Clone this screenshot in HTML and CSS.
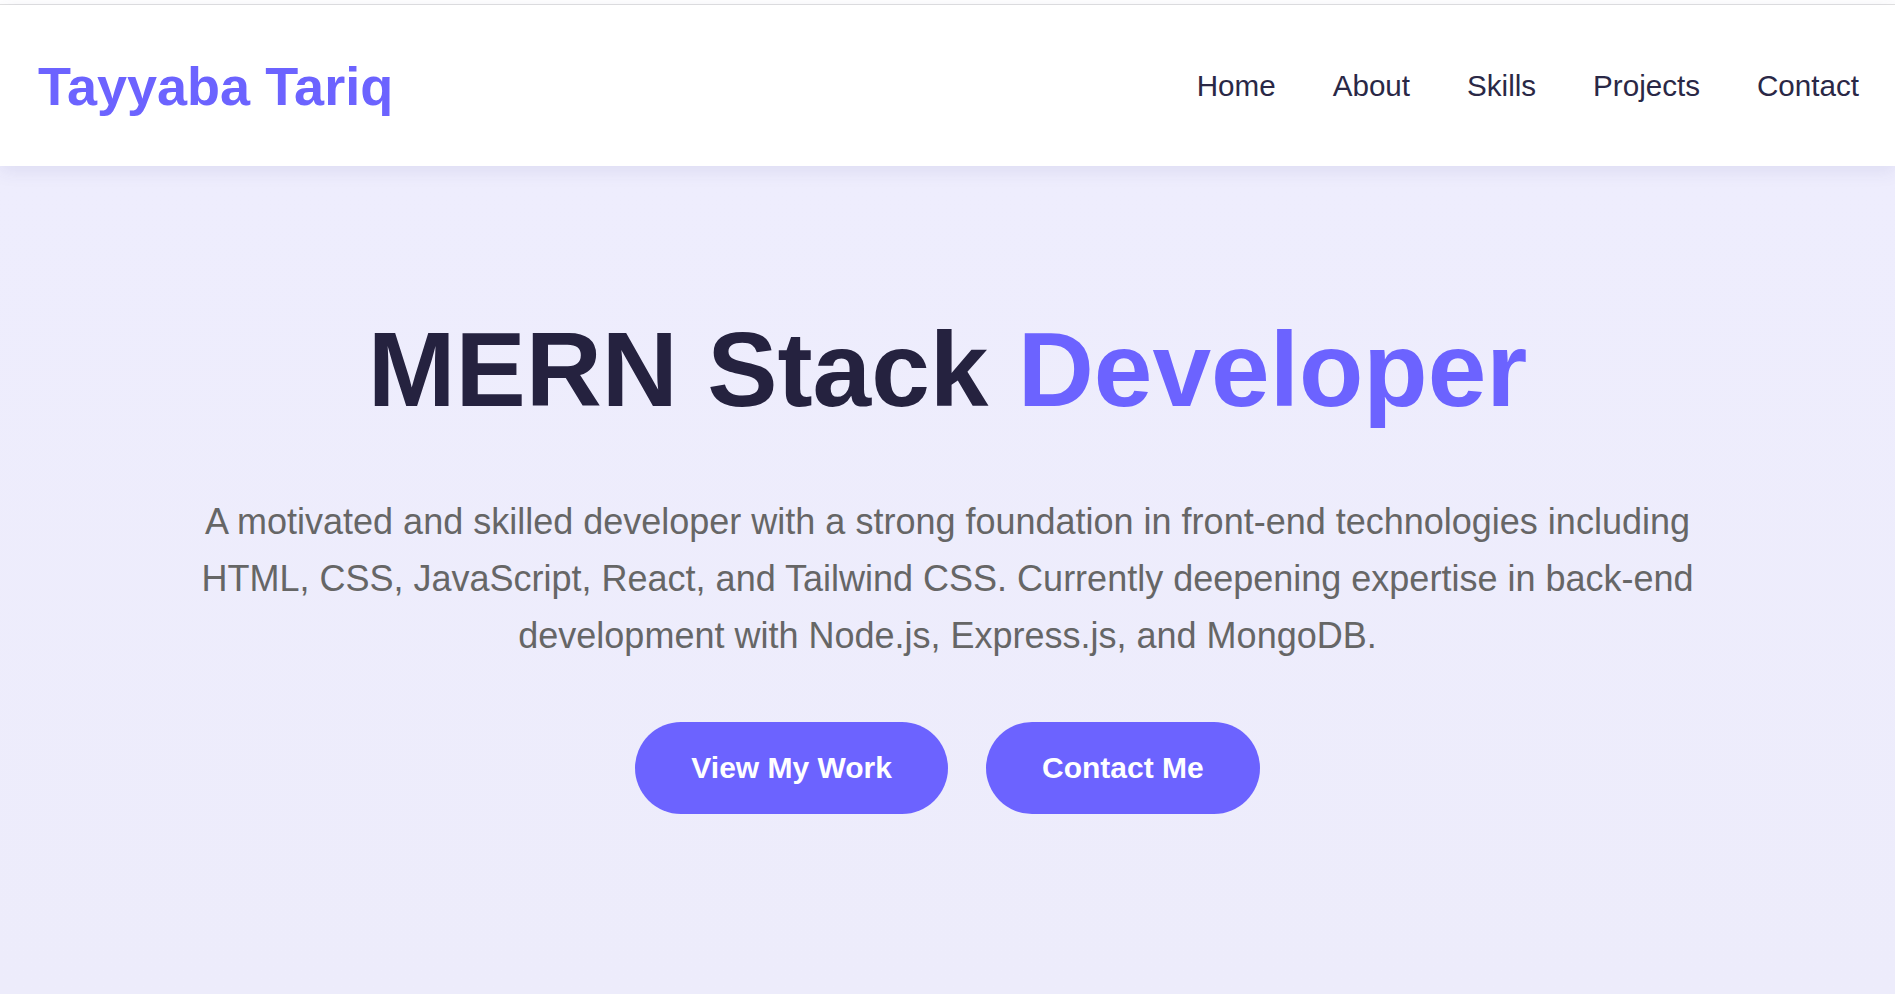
FILE: index.html
```html
<!DOCTYPE html>
<html lang="en">
<head>
<meta charset="utf-8">
<title>Tayyaba Tariq</title>
<link rel="stylesheet" href="styles.css">
</head>
<body>
<div class="topline"></div>
<header class="header">
  <a class="logo" href="#">Tayyaba Tariq</a>
  <nav class="nav">
    <a href="#">Home</a>
    <a href="#">About</a>
    <a href="#">Skills</a>
    <a href="#">Projects</a>
    <a href="#">Contact</a>
  </nav>
</header>
<section class="hero">
  <h1 class="hero-title">MERN Stack <span class="accent">Developer</span></h1>
  <p class="hero-text">A motivated and skilled developer with a strong foundation in front-end technologies including HTML, CSS, JavaScript, React, and Tailwind CSS. Currently deepening expertise in back-end development with Node.js, Express.js, and MongoDB.</p>
  <div class="hero-actions">
    <a class="btn" href="#">View My Work</a>
    <a class="btn" href="#">Contact Me</a>
  </div>
</section>
</body>
</html>
```

FILE: styles.css
```css
* { box-sizing: border-box; }
html, body { margin: 0; padding: 0; }
body {
  font-family: "Liberation Sans", Arial, sans-serif;
  background: #eeedfc;
  height: 994px;
  overflow: hidden;
}
a { text-decoration: none; }
.topline {
  height: 5px;
  background: #fff;
  border-bottom: 1px solid #e2e2e2;
}
.header {
  position: relative;
  z-index: 2;
  height: 161px;
  background: #fff;
  display: flex;
  align-items: center;
  justify-content: space-between;
  padding: 0 36px 0 38px;
  box-shadow: 0 4px 18px rgba(60, 55, 140, 0.10);
}
.logo {
  color: #6c63ff;
  font-weight: 700;
  font-size: 54px;
  line-height: 1;
}
.nav {
  display: flex;
  gap: 57px;
}
.nav a {
  color: #2a2846;
  font-size: 29.6px;
}
.hero {
  background: linear-gradient(180deg, #eeedfd 0%, #edecfb 100%);
  min-height: 828px;
  padding-top: 141px;
  text-align: center;
}
.hero-title {
  margin: 0;
  font-size: 105.4px;
  line-height: 126px;
  font-weight: 700;
  color: #25223f;
}
.accent { color: #6c63ff; }
.hero-text {
  margin: 60px auto 0;
  max-width: 1530px;
  font-size: 36px;
  line-height: 57px;
  color: #666;
}
.hero-actions {
  margin-top: 58px;
  display: flex;
  justify-content: center;
  gap: 38px;
}
.btn {
  display: inline-block;
  background: #6c63ff;
  color: #fff;
  font-weight: 700;
  font-size: 30px;
  line-height: 36px;
  padding: 28px 56px;
  border-radius: 50px;
}
```
